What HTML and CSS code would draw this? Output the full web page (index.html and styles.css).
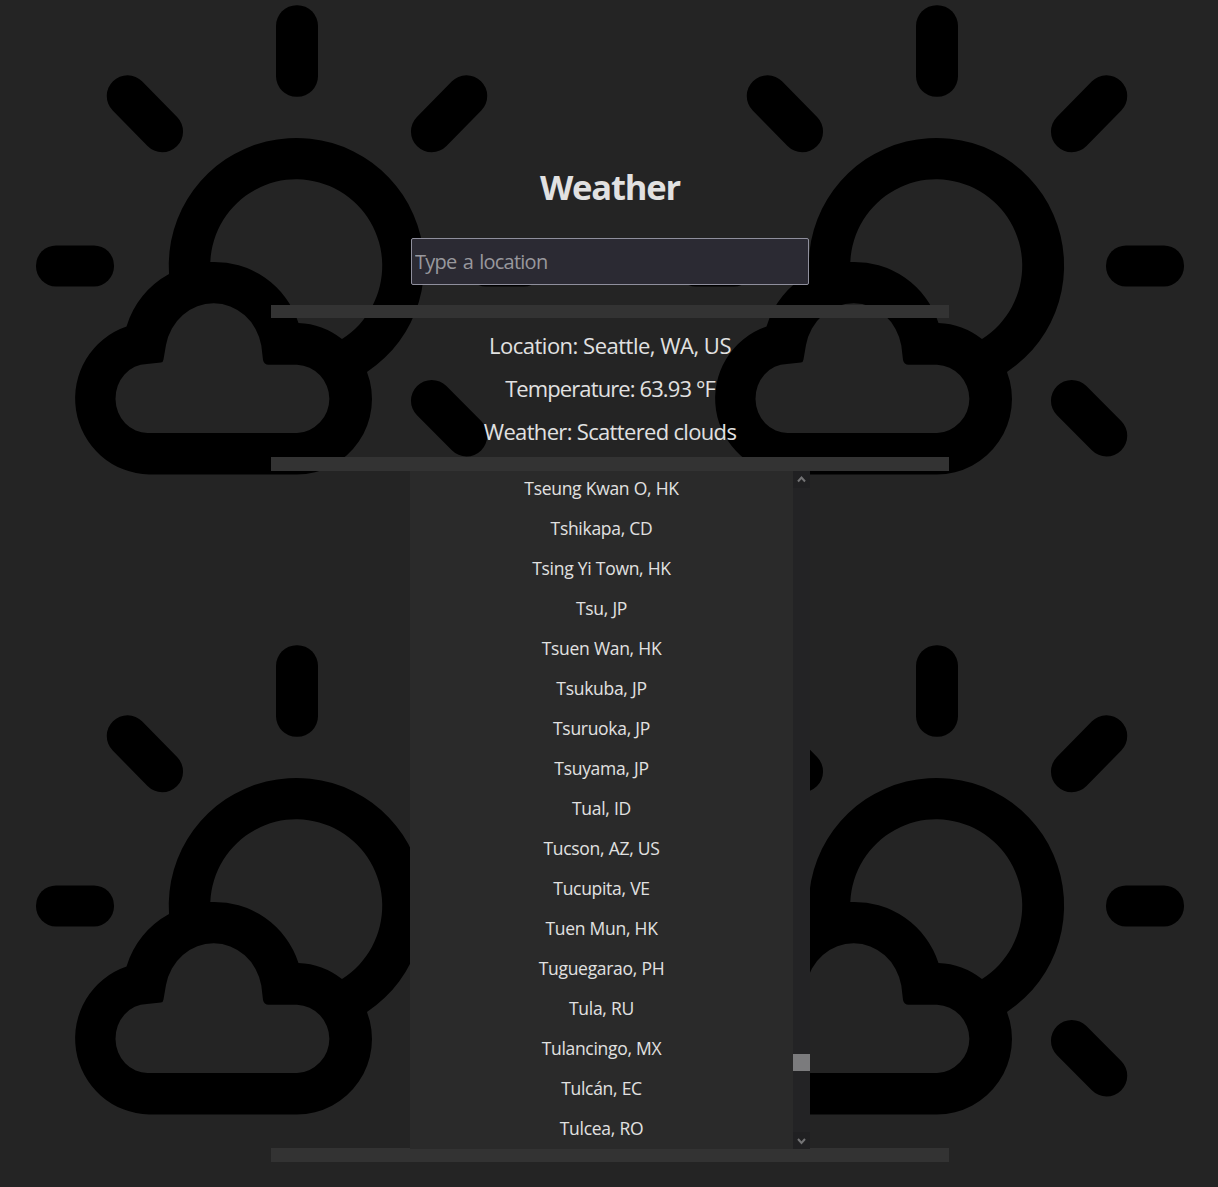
FILE: index.html
```
<!DOCTYPE html>
<html lang="en">
<head>
<meta charset="utf-8">
<title>Weather</title>
<link rel="stylesheet" href="styles.css">
</head>
<body>
<svg class="backdrop" aria-hidden="true">
  <defs>
    <pattern id="sky" width="640" height="640" patternUnits="userSpaceOnUse">
      <rect x="276" y="5.300" width="42" height="91.400" rx="20.500"/>
      <rect x="36" y="245.400" width="78" height="41" rx="20"/>
      <rect x="466" y="245.400" width="78" height="41" rx="20"/>
      <g stroke="#000" stroke-width="41.5" stroke-linecap="round">
        <path d="M127.500 96L162.300 131.500"/>
        <path d="M466.500 96L431.700 131.500"/>
        <path d="M431.700 400.700L466.500 435.700"/>
      </g>
      <path fill-rule="evenodd" d="M169 274A127.700 127.700 0 1 1 367 372A75.500 75.500 0 0 1 297 474.500H149A75.500 76 0 0 1 126.500 326.500A88.500 88.500 0 0 1 169 274ZM210.300 262A88.500 88.500 0 0 1 298.500 323A75.500 75.500 0 0 1 342 339A86 86.500 0 1 0 210.300 262ZM148 433H297A34.200 34.200 0 0 0 297 364.700H268.500Q264 364.700 263 360L261.300 345.500A48.500 51.500 0 0 0 166 345L163.500 359.500Q163.200 362.200 161 362.500L147 364A32 34.500 0 0 0 148 433Z"/>
    </pattern>
  </defs>
  <rect width="100%" height="100%" fill="url(#sky)"/>
</svg>
<main class="app">
  <h1 class="title">Weather</h1>
  <input class="search" type="text" placeholder="Type a location">
  <section class="report">
    <p class="fact location">Location: Seattle, WA, US</p>
    <p class="fact temperature">Temperature: 63.93 °F</p>
    <p class="fact condition">Weather: Scattered clouds</p>
  </section>
  <div class="results">
    <ul class="cities">
      <li>Tseung Kwan O, HK</li>
      <li>Tshikapa, CD</li>
      <li>Tsing Yi Town, HK</li>
      <li>Tsu, JP</li>
      <li>Tsuen Wan, HK</li>
      <li>Tsukuba, JP</li>
      <li>Tsuruoka, JP</li>
      <li>Tsuyama, JP</li>
      <li>Tual, ID</li>
      <li>Tucson, AZ, US</li>
      <li>Tucupita, VE</li>
      <li>Tuen Mun, HK</li>
      <li>Tuguegarao, PH</li>
      <li>Tula, RU</li>
      <li>Tulancingo, MX</li>
      <li>Tulcán, EC</li>
      <li>Tulcea, RO</li>
    </ul>
    <div class="scrollbar">
      <svg class="arrow" viewBox="0 0 17 17"><path d="M5 10.500L8.500 6.500L12 10.500"/></svg>
      <div class="track"><div class="thumb"></div></div>
      <svg class="arrow" viewBox="0 0 17 17"><path d="M5 7L8.500 11L12 7"/></svg>
    </div>
  </div>
  <div class="footer-bar"></div>
</main>
</body>
</html>
```
FILE: styles.css
```
* { box-sizing: border-box; }
body {
  margin: 0;
  height: 1187px;
  overflow: hidden;
  background: #242424;
  color: #e1e1e1;
  font-family: "Open Sans", "Noto Sans", sans-serif;
}
.backdrop {
  position: absolute;
  inset: 0;
  width: 100%;
  height: 100%;
  z-index: -1;
}
.app {
  display: flex;
  flex-direction: column;
  align-items: center;
  padding: 163px 0 0 2px;
}
.title {
  margin: 0 0 27px;
  font-size: 34.500px;
  line-height: 48px;
  font-weight: 700;
  letter-spacing: -1.150px;
}
.search {
  width: 398px;
  height: 47px;
  padding: 0 3px;
  border: 1px solid #8f8f9d;
  border-radius: 2px;
  background: #2b2a33;
  color: #fbfbfe;
  font: 20px "Open Sans", "Noto Sans", sans-serif;
  letter-spacing: -0.75px;
  word-spacing: 1.700px;
}
.search::placeholder { color: #98989d; opacity: 1; }
.report {
  width: 678px;
  height: 166px;
  margin-top: 20px;
  padding-top: 6px;
  border-top: 13px solid #333;
  border-bottom: 14px solid #333;
}
.fact {
  margin: 0;
  font-size: 22px;
  line-height: 43px;
  text-align: center;
  letter-spacing: -0.5px;
  white-space: nowrap;
}
.temperature { letter-spacing: -0.9px; }
.condition { letter-spacing: -0.67px; }
.results {
  display: flex;
  width: 400px;
  height: 678px;
  background: #2a2a2a;
  overflow: hidden;
  z-index: 1;
}
.cities {
  flex: 1;
  margin: -3px 0 0;
  padding: 0;
  list-style: none;
  text-align: center;
  font-size: 17.500px;
  line-height: 40px;
  letter-spacing: -0.3px;
  word-spacing: 0.2px;
}
.scrollbar {
  display: flex;
  flex-direction: column;
  width: 17px;
  background: #232325;
}
.arrow {
  width: 17px;
  height: 17px;
  background: #202022;
  fill: none;
  stroke: #737375;
  stroke-width: 2;
}
.track { flex: 1; padding-top: 566px; }
.thumb { height: 17px; background: #7b7b7d; }
.footer-bar {
  width: 678px;
  height: 14px;
  margin-top: -1px;
  background: #333;
}
```
